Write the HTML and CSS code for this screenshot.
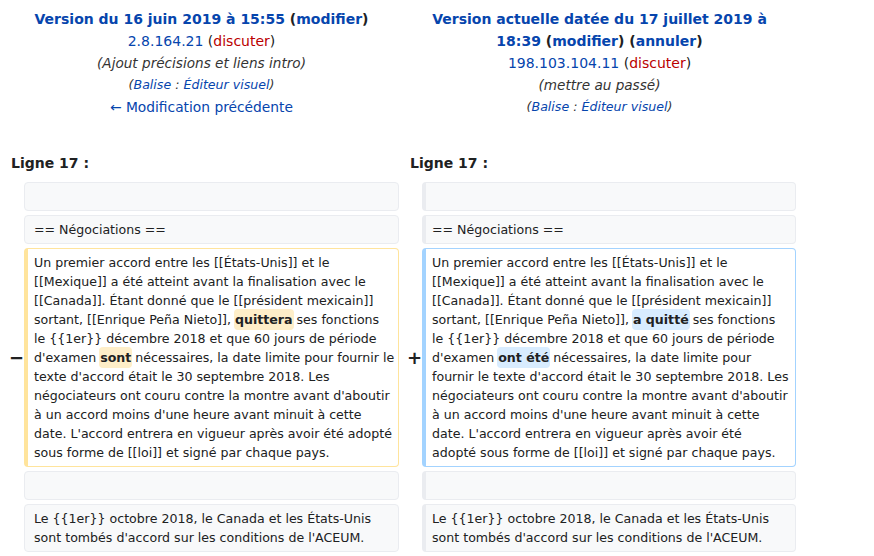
FILE: index.html
```html
<!DOCTYPE html>
<html lang="fr">
<head>
<meta charset="utf-8">
<title>Diff</title>
<link rel="stylesheet" href="styles.css">
</head>
<body>
<div class="diff">
  <div class="title">
    <div class="t-main"><a class="lnk">Version du 16 juin 2019 à 15:55</a>&nbsp;(<a class="lnk">modifier</a>)</div>
    <div class="t-user"><a class="lnk">2.8.164.21</a> (<a class="red">discuter</a>)</div>
    <div class="t-comment">(Ajout précisions et liens intro)</div>
    <div class="t-tags">(<a class="lnk">Balise</a>&nbsp;: <a class="lnk">Éditeur visuel</a>)</div>
    <div class="t-nav"><a class="lnk">← Modification précédente</a></div>
  </div>
  <div class="title">
    <div class="t-main"><a class="lnk">Version actuelle datée du 17 juillet 2019 à 18:39</a>&nbsp;(<a class="lnk">modifier</a>) (<a class="lnk">annuler</a>)</div>
    <div class="t-user"><a class="lnk">198.103.104.11</a> (<a class="red">discuter</a>)</div>
    <div class="t-comment">(mettre au passé)</div>
    <div class="t-tags">(<a class="lnk">Balise</a>&nbsp;: <a class="lnk">Éditeur visuel</a>)</div>
  </div>

  <div class="lineno">Ligne 17 :</div>
  <div class="lineno">Ligne 17 :</div>

  <div class="marker"></div>
  <div class="cell ctx ctx-l">&nbsp;</div>
  <div class="marker"></div>
  <div class="cell ctx">&nbsp;</div>

  <div class="marker"></div>
  <div class="cell ctx ctx-l">== Négociations ==</div>
  <div class="marker"></div>
  <div class="cell ctx">== Négociations ==</div>

  <div class="marker">−</div>
  <div class="cell del">Un premier accord entre les [[États-Unis]] et le<br>
[[Mexique]] a été atteint avant la finalisation avec le<br>
[[Canada]]. Étant donné que le [[président mexicain]]<br>
sortant, [[Enrique Peña Nieto]], <span class="chg-del">quittera</span> ses fonctions<br>
le {{1er}} décembre 2018 et que 60 jours de période<br>
d'examen <span class="chg-del">sont</span> nécessaires, la date limite pour fournir le<br>
texte d'accord était le 30 septembre 2018. Les<br>
négociateurs ont couru contre la montre avant d'aboutir<br>
à un accord moins d'une heure avant minuit à cette<br>
date. L'accord entrera en vigueur après avoir été adopté<br>
sous forme de [[loi]] et signé par chaque pays.</div>
  <div class="marker">+</div>
  <div class="cell add">Un premier accord entre les [[États-Unis]] et le<br>
[[Mexique]] a été atteint avant la finalisation avec le<br>
[[Canada]]. Étant donné que le [[président mexicain]]<br>
sortant, [[Enrique Peña Nieto]], <span class="chg-add">a quitté</span> ses fonctions<br>
le {{1er}} décembre 2018 et que 60 jours de période<br>
d'examen <span class="chg-add">ont été</span> nécessaires, la date limite pour<br>
fournir le texte d'accord était le 30 septembre 2018. Les<br>
négociateurs ont couru contre la montre avant d'aboutir<br>
à un accord moins d'une heure avant minuit à cette<br>
date. L'accord entrera en vigueur après avoir été<br>
adopté sous forme de [[loi]] et signé par chaque pays.</div>

  <div class="marker"></div>
  <div class="cell ctx ctx-l">&nbsp;</div>
  <div class="marker"></div>
  <div class="cell ctx">&nbsp;</div>

  <div class="marker"></div>
  <div class="cell ctx ctx-l">Le {{1er}} octobre 2018, le Canada et les États-Unis<br>
sont tombés d'accord sur les conditions de l'ACEUM.</div>
  <div class="marker"></div>
  <div class="cell ctx">Le {{1er}} octobre 2018, le Canada et les États-Unis<br>
sont tombés d'accord sur les conditions de l'ACEUM.</div>
</div>
</body>
</html>
```

FILE: styles.css
```css
html, body {
  margin: 0;
  padding: 0;
  background: #ffffff;
}

body {
  font-family: "DejaVu Sans", Verdana, sans-serif;
  color: #202122;
}

.diff {
  display: grid;
  grid-template-columns: 16px 375px 15px 374px;
  column-gap: 4px;
  row-gap: 4px;
  padding: 4px 0 0 4px;
}

.lnk {
  color: #0645ad;
  text-decoration: none;
}

.red {
  color: #ba0000;
  text-decoration: none;
}

.title {
  grid-column: span 2;
  text-align: center;
  font-size: 14px;
  line-height: 22px;
  padding: 4px 0 28px;
}

.t-main {
  font-weight: bold;
}

.t-comment {
  font-style: italic;
  font-size: 13.6px;
  color: #333333;
}

.t-tags {
  font-style: italic;
  font-size: 12.6px;
  color: #333333;
}

.t-nav {
  font-size: 13.8px;
}

.lineno {
  grid-column: span 2;
  font-weight: bold;
  font-size: 14px;
  line-height: 20px;
  padding: 3px 7px 5px;
}

.marker {
  display: flex;
  align-items: center;
  justify-content: flex-end;
  margin-right: -4px;
  font-weight: bold;
  font-size: 18px;
  color: #202122;
}

.cell {
  font-size: 12.6px;
  line-height: 19px;
  border: 1px solid #eaecf0;
  border-left-width: 4px;
  border-radius: 4px;
  padding: 4px 1px 4px 6px;
}

.ctx {
  background: #f8f9fa;
  border-color: #eaecf0;
}

.ctx-l {
  border-left-width: 1px;
  padding-left: 9px;
}

.del {
  background: #ffffff;
  border-color: #ffe49c;
}

.add {
  background: #ffffff;
  border-color: #a3d3ff;
}

.chg-del,
.chg-add {
  font-weight: bold;
  border-radius: 4px;
  padding: 3px 1px;
  margin: 0 -1px;
}

.chg-del {
  background: #feeec8;
}

.chg-add {
  background: #d8ecff;
}
```
